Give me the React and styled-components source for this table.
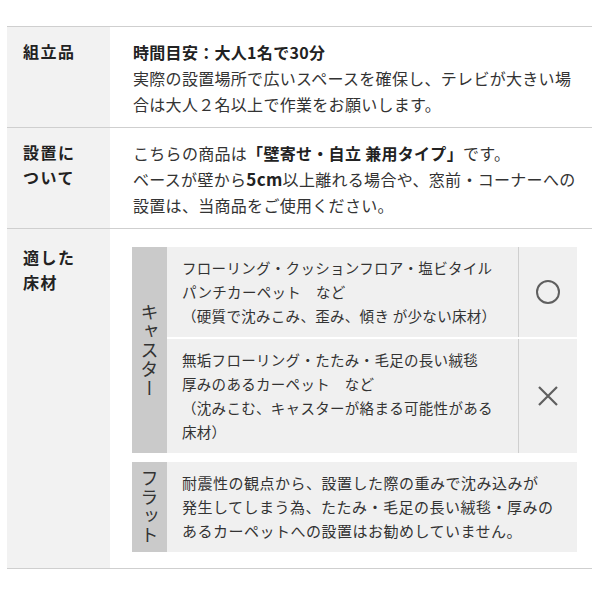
import React from "react";
import styled, { createGlobalStyle } from "styled-components";

const GlobalStyle = createGlobalStyle`
  html, body { margin: 0; padding: 0; background: #fff; }
  body {
    font-family: "Noto Sans CJK JP", "Noto Sans", sans-serif;
    color: #333;
  }
`;

const Page = styled.div`
  padding: 26px 8px 0 7px;
`;

const Table = styled.div`
  border-top: 1px solid #cfcfcf;
`;

const Row = styled.div`
  display: grid;
  grid-template-columns: 103px 1fr;
  border-bottom: 1px solid #cfcfcf;
`;

const Label = styled.div`
  background: #f2f2f2;
  padding: ${(p) => p.$top}px 0 10px 16px;
  font-size: 16px;
  line-height: 25px;
  font-weight: 700;
  letter-spacing: 1.5px;
  color: #222;
`;

const Content = styled.div`
  padding: ${(p) => p.$top}px 15px ${(p) => p.$bottom}px 23px;
  font-size: 16px;
  line-height: 26px;
  letter-spacing: 0.3px;
  color: #333;
  white-space: nowrap;
`;

const Strong = styled.b`
  font-weight: 700;
  color: #222;
`;

const Big = styled.b`
  font-weight: 700;
  font-size: 17px;
  color: #222;
`;

const Inner = styled.div`
  display: flex;
  flex-direction: column;
  gap: 9px;
  margin-left: -1px;
`;

const Group = styled.div`
  display: grid;
  grid-template-columns: 35px 1fr;
`;

const Side = styled.div`
  background: #cacaca;
  display: flex;
  align-items: center;
  justify-content: center;
  writing-mode: vertical-rl;
  text-orientation: upright;
  font-size: 18px;
  letter-spacing: 1px;
  color: #333;
`;

const Rows = styled.div`
  display: flex;
  flex-direction: column;
  gap: 2px;
`;

const FloorRow = styled.div`
  display: grid;
  grid-template-columns: 1fr 59px;
  background: #f0f0f0;
`;

const Desc = styled.div`
  padding: 9px 0 9px 15px;
  font-size: ${(p) => (p.$wide ? "15px" : "14.5px")};
  line-height: 24px;
  letter-spacing: ${(p) => (p.$wide ? "0.5px" : "0.3px")};
  color: #333;
  background: #f0f0f0;
`;

const Mark = styled.div`
  border-left: 1px solid #cfcfcf;
  display: flex;
  align-items: center;
  justify-content: center;
`;

const Circle = () => (
  <svg width="26" height="26" viewBox="0 0 26 26">
    <circle cx="13" cy="13" r="11" fill="none" stroke="#5f5f5f" strokeWidth="2" />
  </svg>
);

const Cross = () => (
  <svg width="22" height="22" viewBox="0 0 22 22">
    <path d="M2 2 L20 20 M20 2 L2 20" stroke="#5f5f5f" strokeWidth="2.2" fill="none" />
  </svg>
);

export default function App() {
  return (
    <>
      <GlobalStyle />
      <Page>
        <Table>
          <Row>
            <Label $top={12}>組立品</Label>
            <Content $top={12} $bottom={10}>
              <Strong>時間目安：大人1名で30分</Strong>
              <br />
              実際の設置場所で広いスペースを確保し、テレビが大きい場
              <br />
              合は大人２名以上で作業をお願いします。
            </Content>
          </Row>
          <Row>
            <Label $top={12}>
              設置に
              <br />
              ついて
            </Label>
            <Content $top={12} $bottom={10}>
              こちらの商品は<Strong>「壁寄せ・自立 兼用タイプ」</Strong>です。
              <br />
              ベースが壁から<Big>5cm</Big>以上離れる場合や、窓前・コーナーへの
              <br />
              設置は、当商品をご使用ください。
            </Content>
          </Row>
          <Row>
            <Label $top={16}>
              適した
              <br />
              床材
            </Label>
            <Content $top={18} $bottom={16}>
              <Inner>
                <Group>
                  <Side>キャスター</Side>
                  <Rows>
                    <FloorRow>
                      <Desc>
                        フローリング・クッションフロア・塩ビタイル
                        <br />
                        パンチカーペット　など
                        <br />
                        （硬質で沈みこみ、歪み、傾き が少ない床材）
                      </Desc>
                      <Mark>
                        <Circle />
                      </Mark>
                    </FloorRow>
                    <FloorRow>
                      <Desc>
                        無垢フローリング・たたみ・毛足の長い絨毯
                        <br />
                        厚みのあるカーペット　など
                        <br />
                        （沈みこむ、キャスターが絡まる可能性がある
                        <br />
                        床材）
                      </Desc>
                      <Mark>
                        <Cross />
                      </Mark>
                    </FloorRow>
                  </Rows>
                </Group>
                <Group>
                  <Side>フラット</Side>
                  <Desc $wide>
                    耐震性の観点から、設置した際の重みで沈み込みが
                    <br />
                    発生してしまう為、たたみ・毛足の長い絨毯・厚みの
                    <br />
                    あるカーペットへの設置はお勧めしていません。
                  </Desc>
                </Group>
              </Inner>
            </Content>
          </Row>
        </Table>
      </Page>
    </>
  );
}
